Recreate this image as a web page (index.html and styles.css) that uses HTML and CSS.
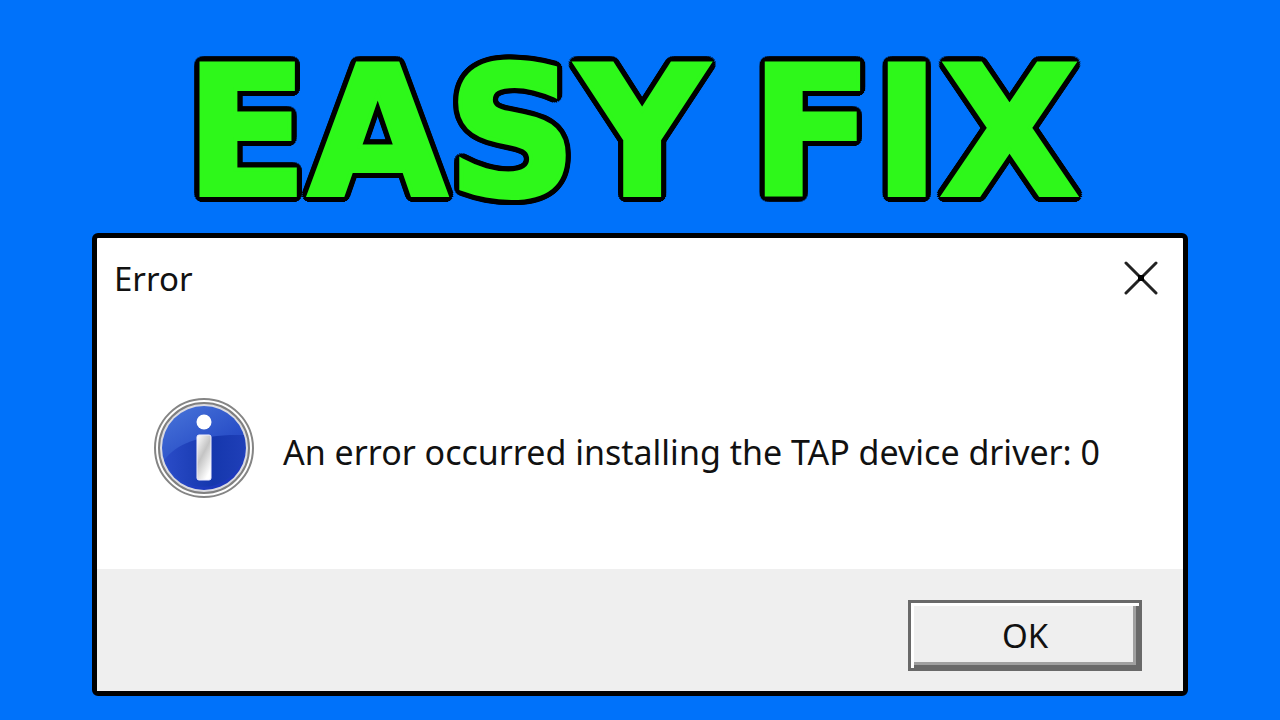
FILE: index.html
```html
<!DOCTYPE html>
<html lang="en">
<head>
    <meta charset="UTF-8">
    <meta name="viewport" content="width=device-width, initial-scale=1.0">
    <title>Easy Fix</title>
    <link rel="stylesheet" href="styles.css">
</head>
<body>
    <h1 class="headline">
        <span>EASY</span>
        <span>FIX</span>
    </h1>

    <div class="dialog" role="alertdialog" aria-labelledby="dialog-title" aria-describedby="dialog-message">
        <div class="title-bar">
            <h2 class="dialog-title" id="dialog-title">Error</h2>
            <button type="button" class="close-button" aria-label="Close">
                <svg width="36" height="36" viewBox="0 0 36 36">
                    <path d="M3 2 L33 32 M33 2 L3 32" stroke="#222" stroke-width="3" stroke-linecap="round"/>
                    <rect x="15" y="14" width="6" height="6" fill="#000"/>
                </svg>
            </button>
        </div>

        <div class="dialog-body">
            <svg class="info-icon" width="102" height="102" viewBox="0 0 102 102" aria-hidden="true">
                <defs>
                    <linearGradient id="ball" x1="0" y1="0" x2="0.6" y2="1">
                        <stop offset="0" stop-color="#4a76da"/>
                        <stop offset="0.6" stop-color="#2a50c8"/>
                        <stop offset="1" stop-color="#1c37bb"/>
                    </linearGradient>
                    <linearGradient id="shade" x1="0" y1="0" x2="1" y2="0">
                        <stop offset="0" stop-color="#2a4cc8"/>
                        <stop offset="0.6" stop-color="#1537ad"/>
                        <stop offset="1" stop-color="#1f3fb8"/>
                    </linearGradient>
                    <linearGradient id="stem" x1="0" y1="0" x2="0.6" y2="1">
                        <stop offset="0" stop-color="#fff"/>
                        <stop offset="0.5" stop-color="#c4c4c4"/>
                        <stop offset="1" stop-color="#fff"/>
                    </linearGradient>
                </defs>
                <circle cx="51" cy="51" r="49" fill="#fff" stroke="#858585" stroke-width="2"/>
                <circle cx="51" cy="51" r="45" fill="#dcdce2" stroke="#808080" stroke-width="2"/>
                <circle cx="51" cy="51" r="42" fill="url(#ball)"/>
                <path d="M11 63 C25 46 46 37 91 38 A42 42 0 0 1 11 63 Z" fill="url(#shade)"/>
                <circle cx="51" cy="25" r="7.5" fill="#fff"/>
                <rect x="44" y="38" width="14" height="45" rx="2" fill="url(#stem)" stroke="#eef" stroke-width="1"/>
            </svg>
            <p class="message" id="dialog-message">An error occurred installing the TAP device driver: 0</p>
        </div>

        <div class="dialog-footer">
            <button type="button" class="ok-button">OK</button>
        </div>
    </div>
</body>
</html>
```

FILE: styles.css
```css
* {
    margin: 0;
    padding: 0;
    box-sizing: border-box;
}

body {
    background: #0072fa;
    font-family: 'Noto Sans', 'Open Sans', sans-serif;
    color: #111;
    min-height: 100vh;
    padding: 33px 92px 24px;
}

/* Green stroke fattens the letters, the ring of shadows is the outline */
.headline {
    display: flex;
    justify-content: center;
    gap: 43px;
    padding-right: 16px;
    font-family: 'DejaVu Sans', sans-serif;
    font-size: 180px;
    font-weight: bold;
    line-height: 200px;
    color: #2ef81a;
    -webkit-text-stroke: 4px #2ef81a;
    text-shadow:
        7px 0 #000, -7px 0 #000, 0 7px #000, 0 -7px #000,
        7px 2px #000, -7px 2px #000, 7px -2px #000, -7px -2px #000,
        6px 4px #000, -6px 4px #000, 6px -4px #000, -6px -4px #000,
        5px 5px #000, -5px 5px #000, 5px -5px #000, -5px -5px #000,
        4px 6px #000, -4px 6px #000, 4px -6px #000, -4px -6px #000,
        2px 7px #000, -2px 7px #000, 2px -7px #000, -2px -7px #000;
}

.dialog {
    background: #fff;
    border: 5px solid #000;
    border-radius: 6px;
}

.title-bar {
    display: flex;
    justify-content: space-between;
    align-items: center;
    padding: 16px 24px 0 17px;
}

.dialog-title {
    font-size: 33px;
    font-weight: normal;
    line-height: 50px;
}

.close-button {
    width: 36px;
    height: 36px;
    background: none;
    border: none;
    cursor: pointer;
}

.close-button svg {
    display: block;
}

.dialog-body {
    display: flex;
    align-items: center;
    gap: 28px;
    padding: 93px 56px 70px;
}

.info-icon {
    flex: none;
}

.message {
    padding-top: 8px;
    font-size: 34px;
    line-height: 48px;
}

.dialog-footer {
    display: flex;
    justify-content: flex-end;
    background: #efefef;
    padding: 31px 41px 20px;
}

.ok-button {
    width: 234px;
    height: 71px;
    background: #efefef;
    border: 3px solid #696969;
    box-shadow: inset 3px 3px #fff, inset -3px -3px #696969, inset -6px -6px #a0a0a0;
    font-family: inherit;
    font-size: 33px;
    color: #111;
    cursor: pointer;
}

.ok-button:active {
    box-shadow: inset 3px 3px #a0a0a0;
}
```
